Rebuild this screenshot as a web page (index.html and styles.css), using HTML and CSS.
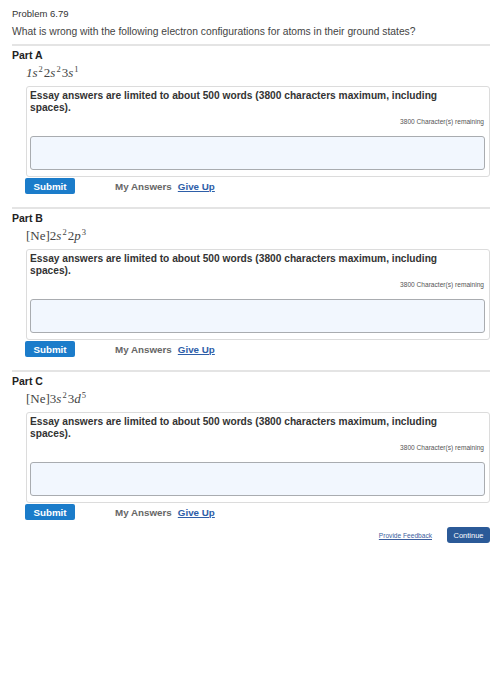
FILE: index.html
```html
<!DOCTYPE html>
<html>
<head>
<meta charset="utf-8">
<link rel="stylesheet" href="styles.css">
</head>
<body>
<div class="page">
  <div class="title">Problem 6.79</div>
  <div class="question">What is wrong with the following electron configurations for atoms in their ground states?</div>

  <div class="part">
    <div class="part-label">Part A</div>
    <div class="formula"><i>1s</i><sup>2</sup>2<i>s</i><sup>2</sup>3<i>s</i><sup>1</sup></div>
    <div class="box">
      <div class="essay">Essay answers are limited to about 500 words (3800 characters maximum, including spaces).</div>
      <div class="remaining">3800 Character(s) remaining</div>
      <textarea class="answer"></textarea>
    </div>
    <div class="actions">
      <button class="submit">Submit</button>
      <span class="my">My Answers</span>
      <a class="giveup" href="#">Give Up</a>
    </div>
  </div>

  <div class="part">
    <div class="part-label">Part B</div>
    <div class="formula">[Ne]2<i>s</i><sup>2</sup>2<i>p</i><sup>3</sup></div>
    <div class="box">
      <div class="essay">Essay answers are limited to about 500 words (3800 characters maximum, including spaces).</div>
      <div class="remaining">3800 Character(s) remaining</div>
      <textarea class="answer"></textarea>
    </div>
    <div class="actions">
      <button class="submit">Submit</button>
      <span class="my">My Answers</span>
      <a class="giveup" href="#">Give Up</a>
    </div>
  </div>

  <div class="part">
    <div class="part-label">Part C</div>
    <div class="formula">[Ne]3<i>s</i><sup>2</sup>3<i>d</i><sup>5</sup></div>
    <div class="box">
      <div class="essay">Essay answers are limited to about 500 words (3800 characters maximum, including spaces).</div>
      <div class="remaining">3800 Character(s) remaining</div>
      <textarea class="answer"></textarea>
    </div>
    <div class="actions">
      <button class="submit">Submit</button>
      <span class="my">My Answers</span>
      <a class="giveup" href="#">Give Up</a>
    </div>
  </div>

  <div class="footer">
    <a class="feedback" href="#">Provide Feedback</a>
    <button class="continue">Continue</button>
  </div>
</div>
</body>
</html>
```

FILE: styles.css
```css
body {
  margin: 0;
  background: #ffffff;
  font-family: "Liberation Sans", Arial, Helvetica, sans-serif;
  color: #333;
}

.page {
  width: 478px;
  padding: 8px 12px 0 12px;
}

.title {
  font-size: 9.5px;
  line-height: 12px;
  color: #333;
}

.question {
  font-size: 10.3px;
  line-height: 14px;
  margin-top: 5px;
  color: #444;
}

.part {
  border-top: 2px solid #e4e4e4;
  margin-top: 5px;
  padding-top: 2px;
}

.part + .part {
  margin-top: 13px;
}

.part-label {
  font-weight: bold;
  font-size: 10.5px;
  line-height: 14px;
  color: #222;
}

.formula {
  margin-top: 3px;
  margin-left: 14px;
  font-family: "Liberation Serif", "Times New Roman", serif;
  font-size: 13px;
  line-height: 16px;
  color: #444;
}

.formula sup {
  font-size: 8.5px;
  line-height: 0;
  vertical-align: 5px;
  margin: 0 1px 0 1px;
}

.box {
  margin-top: 5px;
  margin-left: 14px;
  border: 1px solid #dcdcdc;
  border-radius: 3px;
  padding: 3px 4px 6px 3px;
  display: flex;
  flex-direction: column;
}

.essay {
  max-width: 415px;
  font-weight: bold;
  font-size: 10.2px;
  line-height: 12px;
  color: #333;
}

.remaining {
  margin-top: 4px;
  text-align: right;
  font-size: 6.6px;
  line-height: 8px;
  color: #555;
  padding-right: 1px;
}

.answer {
  margin-top: 10px;
  height: 34px;
  box-sizing: border-box;
  border: 1px solid #a9acb0;
  border-radius: 3px;
  background: #f2f7fe;
  resize: none;
  overflow: hidden;
  padding: 0;
  font-family: inherit;
}

.actions {
  margin-top: 1px;
  margin-left: 13px;
  display: flex;
  align-items: center;
  height: 16px;
}

.submit {
  width: 50px;
  height: 16px;
  padding: 0;
  border: none;
  border-radius: 2px;
  background: #1b7cca;
  color: #fff;
  font-family: inherit;
  font-weight: bold;
  font-size: 9.8px;
}

.my {
  margin-left: 40px;
  font-weight: bold;
  font-size: 9.8px;
  color: #666;
}

.giveup {
  margin-left: 6px;
  font-weight: bold;
  font-size: 9.8px;
  color: #2e5ea8;
  text-decoration: underline;
}

.footer {
  margin-top: 7px;
  display: flex;
  justify-content: flex-end;
  align-items: center;
  gap: 15px;
}

.feedback {
  font-size: 6.6px;
  color: #3b5e9e;
  text-decoration: underline;
}

.continue {
  width: 43px;
  height: 16px;
  padding: 0;
  border: none;
  border-radius: 3px;
  background: #2b5a98;
  color: #fff;
  font-family: inherit;
  font-size: 7.5px;
}
```
